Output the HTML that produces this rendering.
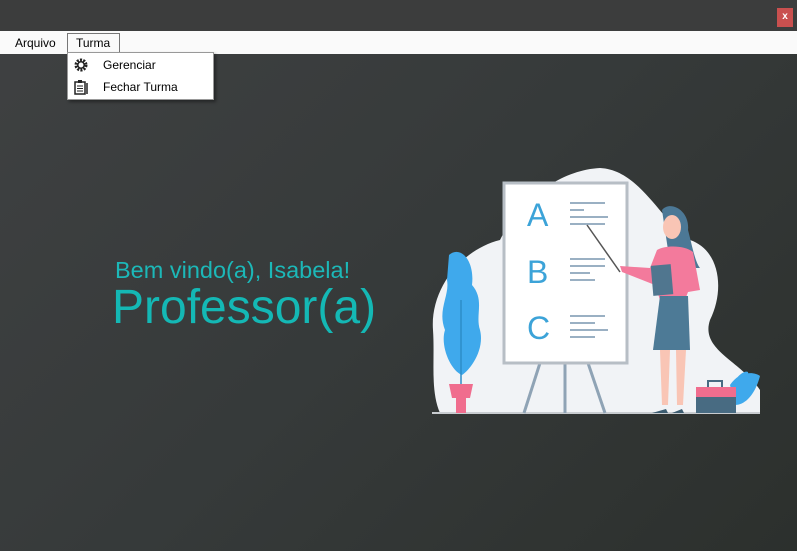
<!DOCTYPE html>
<html><head><meta charset="utf-8"><style>
*{margin:0;padding:0;box-sizing:border-box}
body{width:797px;height:551px;overflow:hidden;position:relative;font-family:"Liberation Sans",sans-serif;background:linear-gradient(135deg,#3f4142 0%,#363a3a 50%,#2c302d 100%)}
.title{position:absolute;left:0;top:0;width:797px;height:31px;background:#3c3d3d}
.close{position:absolute;left:777px;top:8px;width:16px;height:19px;background:#c9504f;color:#fff;font-size:10px;font-weight:bold;text-align:center;line-height:18px}
.menu{position:absolute;left:0;top:31px;width:797px;height:23px;background:#fafafa;font-size:12px;color:#000}
.menu span{position:absolute;top:5px}
.tab{position:absolute;left:67px;top:33px;width:53px;height:21px;border:1px solid #777;border-bottom:none;background:#fafafa}
.drop{position:absolute;left:67px;top:52px;width:147px;height:48px;background:#fff;border:1px solid #999;box-shadow:2px 2px 3px rgba(0,0,0,.4);font-size:12px}
.drop div{position:absolute;left:35px}
.t1{position:absolute;left:115px;top:257px;font-size:23.5px;color:#1cb8b8}
.t2{position:absolute;left:112px;top:280px;font-size:48px;color:#14b8b5}
</style></head><body>
<div class="title"></div><div class="close">x</div>
<div class="menu"><span style="left:15px">Arquivo</span></div>
<div class="tab"></div><span style="position:absolute;left:76px;top:36px;font-size:12px">Turma</span>
<div class="drop">
<svg style="position:absolute;left:6px;top:5px" width="14" height="14" viewBox="0 0 14 14"><circle cx="7" cy="7" r="5" fill="none" stroke="#222" stroke-width="3" stroke-dasharray="2 1.2"/><circle cx="7" cy="7" r="3.2" fill="none" stroke="#222" stroke-width="1.5"/></svg>
<svg style="position:absolute;left:5px;top:26px" width="16" height="16" viewBox="0 0 16 16"><rect x="2" y="3" width="10" height="12" fill="none" stroke="#222" stroke-width="1.5"/><rect x="5" y="1" width="4" height="3" fill="#222"/><path d="M4 7h6M4 9.5h6M4 12h6" stroke="#222"/><path d="M14 4v11" stroke="#222" stroke-width="1.5"/></svg>
<div style="top:5px">Gerenciar</div><div style="top:27px">Fechar Turma</div></div>
<div class="t1">Bem vindo(a), Isabela!</div>
<div class="t2">Professor(a)</div>
<svg style="position:absolute;left:0;top:0" width="797" height="551">
<path d="M433 330 C430 290 460 250 500 240 C520 200 560 170 600 168 C640 170 660 220 690 240 C720 250 725 290 710 320 C700 350 740 360 760 390 L760 413 L440 413 C430 390 435 360 433 330Z" fill="#f1f3f6"/>
<line x1="432" y1="413" x2="760" y2="413" stroke="#c8ccd0" stroke-width="2"/>
<path d="M540 363 L524 413 M565 363 L565 413 M588 363 L605 413" stroke="#8fa3b5" stroke-width="3"/>
<rect x="504" y="183" width="123" height="180" fill="#fff" stroke="#b7bec5" stroke-width="3"/>
<g font-family="Liberation Sans" font-size="32" fill="#3ca3d8"><text x="527" y="226">A</text><text x="527" y="283">B</text><text x="527" y="339">C</text></g>
<g stroke="#9ab0c3" stroke-width="2"><path d="M570 203h35M570 210h14M570 217h38M570 224h35M570 259h35M570 266h35M570 273h20M570 280h25M570 316h35M570 323h25M570 330h38M570 337h25"/></g>
<line x1="587" y1="225" x2="620" y2="272" stroke="#555" stroke-width="1.5"/>
<path d="M449 255 C460 245 475 260 472 285 C485 300 475 315 480 330 C485 350 470 370 462 375 C450 370 440 345 445 330 C437 310 450 295 447 280Z" fill="#3fa9ec"/>
<line x1="461" y1="300" x2="461" y2="385" stroke="#2d8cc8" stroke-width="1.5"/>
<path d="M449 384 h24 l-3 14 h-4 v15 h-10 v-15 h-4z" fill="#f06d8e"/>
<path d="M662 210 C670 200 690 210 688 230 C692 245 695 262 700 268 L688 268 L668 250Z" fill="#4c7896"/>
<ellipse cx="672" cy="227" rx="9" ry="12" fill="#f9c5b5"/>
<path d="M657 250 C665 245 685 245 693 252 L700 290 L688 292 L685 300 L660 300 L655 285 L622 272 L620 266 L650 268Z" fill="#f37a9c"/>
<rect x="652" y="265" width="20" height="30" fill="#50768f" transform="rotate(-5 662 280)"/>
<path d="M660 296 L688 296 L690 350 L653 350Z" fill="#4d7a96"/>
<path d="M660 350 h10 l-2 55 h-6z M676 350 h10 l-3 55 h-6z" fill="#f9c5b5"/>
<path d="M652 413 l14 -4 l2 4z M672 413 l10 -4 l2 4z" fill="#3c5c70"/>
<path d="M730 385 C740 370 755 372 760 376 C755 395 745 405 735 405Z M730 392 C735 375 745 370 748 372 C750 385 740 398 733 400Z" fill="#3fa9ec"/>
<rect x="696" y="387" width="40" height="26" fill="#486b82"/>
<rect x="696" y="387" width="40" height="10" fill="#f06d8e"/>
<path d="M708 387 v-6 h14 v6" fill="none" stroke="#486b82" stroke-width="2"/>
</svg>
</body></html>
